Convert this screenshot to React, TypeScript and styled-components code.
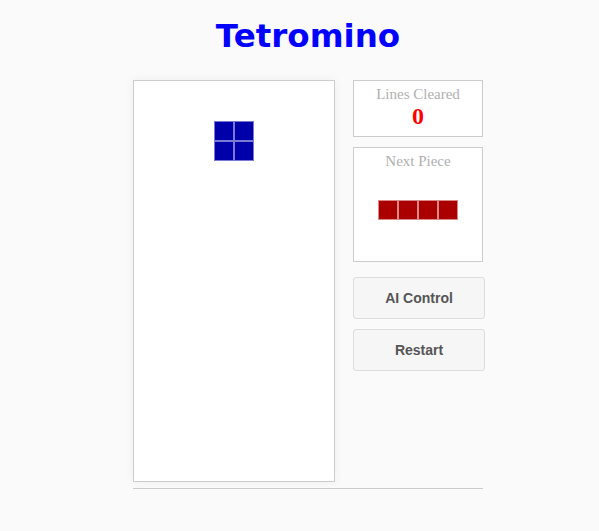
import styled, { createGlobalStyle } from "styled-components";

const GlobalStyle = createGlobalStyle`
  body {
    margin: 0;
    background: #fafafa;
    font-family: "Liberation Serif", serif;
  }
  #root {
    padding-left: 17px;
  }
`;

const Page = styled.div`
  width: 350px;
  margin: 0 auto;
`;

const Title = styled.h1`
  margin: 0;
  padding: 16px 0 24px;
  text-align: center;
  font-family: "DejaVu Sans", Verdana, sans-serif;
  font-weight: bold;
  font-size: 32.5px;
  line-height: 40px;
  color: #0000ff;
`;

const Game = styled.div`
  display: flex;
  align-items: flex-start;
  gap: 18px;
`;

const Board = styled.div`
  display: grid;
  grid-template-columns: repeat(10, 20px);
  grid-template-rows: repeat(20, 20px);
  background: #fff;
  border: 1px solid #ccc;
  box-shadow: 0 0 10px rgba(0, 0, 0, 0.05);
`;

const Cell = styled.div<{ $color?: string; $edge?: string }>`
  box-sizing: border-box;
  width: 20px;
  height: 20px;
  background: ${(p) => p.$color || "transparent"};
  border: ${(p) => (p.$color ? `1px solid ${p.$edge}` : "none")};
`;

const Side = styled.div`
  width: 130px;
  display: flex;
  flex-direction: column;
`;

const Panel = styled.div<{ $height: number }>`
  box-sizing: border-box;
  height: ${(p) => p.$height}px;
  background: #fff;
  border: 1px solid #ccc;
  text-align: center;
  padding-top: 5px;
  margin-bottom: 10px;
`;

const Label = styled.div`
  font-size: 15px;
  line-height: 17px;
  color: #b0b0b0;
`;

const Score = styled.div`
  font-size: 24px;
  line-height: 26px;
  font-weight: bold;
  color: #ff0000;
`;

const Preview = styled.div`
  display: grid;
  grid-template-columns: repeat(4, 20px);
  justify-content: center;
  margin-top: 30px;
`;

const Button = styled.button`
  display: block;
  box-sizing: border-box;
  width: 132px;
  height: 42px;
  margin: 5px 0 0;
  & + & {
    margin-top: 10px;
  }
  background: #f6f6f6;
  border: 1px solid #ddd;
  border-radius: 3px;
  font-family: "Liberation Sans", Arial, sans-serif;
  font-weight: bold;
  font-size: 14px;
  color: #555;
  cursor: pointer;
`;

const Rule = styled.hr`
  margin: 6px 0 0;
  border: none;
  border-top: 1px solid #ccc;
`;

const BLUE = "#0000aa";
const BLUE_EDGE = "#7a7ad6";
const RED = "#aa0000";
const RED_EDGE = "#d88a8a";

const filled = new Set(["2,4", "2,5", "3,4", "3,5"]);

export default function App() {
  const cells = [];
  for (let r = 0; r < 20; r++) {
    for (let c = 0; c < 10; c++) {
      const on = filled.has(`${r},${c}`);
      cells.push(
        <Cell key={`${r}-${c}`} $color={on ? BLUE : undefined} $edge={BLUE_EDGE} />
      );
    }
  }

  return (
    <>
      <GlobalStyle />
      <Page>
        <Title>Tetromino</Title>
        <Game>
          <Board>{cells}</Board>
          <Side>
            <Panel $height={57}>
              <Label>Lines Cleared</Label>
              <Score>0</Score>
            </Panel>
            <Panel $height={115}>
              <Label>Next Piece</Label>
              <Preview>
                {[0, 1, 2, 3].map((i) => (
                  <Cell key={i} $color={RED} $edge={RED_EDGE} />
                ))}
              </Preview>
            </Panel>
            <Button>AI Control</Button>
            <Button>Restart</Button>
          </Side>
        </Game>
        <Rule />
      </Page>
    </>
  );
}
